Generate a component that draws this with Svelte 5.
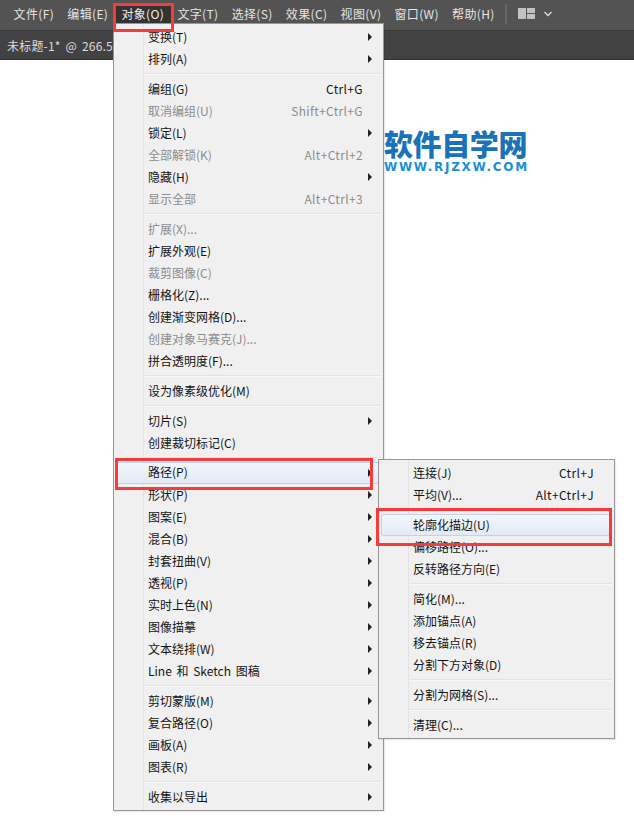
<script>
  const menuBar = ['文件(F)', '编辑(E)', '对象(O)', '文字(T)', '选择(S)', '效果(C)', '视图(V)', '窗口(W)', '帮助(H)'];

  // each group is one block between separators
  const objectMenu = [
    [{ t: '变换(T)', sub: 1 }, { t: '排列(A)', sub: 1 }],
    [
      { t: '编组(G)', key: 'Ctrl+G' },
      { t: '取消编组(U)', key: 'Shift+Ctrl+G', off: 1 },
      { t: '锁定(L)', sub: 1 },
      { t: '全部解锁(K)', key: 'Alt+Ctrl+2', off: 1 },
      { t: '隐藏(H)', sub: 1 },
      { t: '显示全部', key: 'Alt+Ctrl+3', off: 1 },
    ],
    [
      { t: '扩展(X)...', off: 1 },
      { t: '扩展外观(E)' },
      { t: '裁剪图像(C)', off: 1 },
      { t: '栅格化(Z)...' },
      { t: '创建渐变网格(D)...' },
      { t: '创建对象马赛克(J)...', off: 1 },
      { t: '拼合透明度(F)...' },
    ],
    [{ t: '设为像素级优化(M)' }],
    [{ t: '切片(S)', sub: 1 }, { t: '创建裁切标记(C)' }],
    [
      { t: '路径(P)', sub: 1, hot: 1 },
      { t: '形状(P)', sub: 1 },
      { t: '图案(E)', sub: 1 },
      { t: '混合(B)', sub: 1 },
      { t: '封套扭曲(V)', sub: 1 },
      { t: '透视(P)', sub: 1 },
      { t: '实时上色(N)', sub: 1 },
      { t: '图像描摹', sub: 1 },
      { t: '文本绕排(W)', sub: 1 },
      { t: 'Line 和 Sketch 图稿', sub: 1 },
    ],
    [
      { t: '剪切蒙版(M)', sub: 1 },
      { t: '复合路径(O)', sub: 1 },
      { t: '画板(A)', sub: 1 },
      { t: '图表(R)', sub: 1 },
    ],
    [{ t: '收集以导出', sub: 1 }],
  ];

  const pathMenu = [
    [{ t: '连接(J)', key: 'Ctrl+J' }, { t: '平均(V)...', key: 'Alt+Ctrl+J' }],
    [{ t: '轮廓化描边(U)', hot: 1 }, { t: '偏移路径(O)...' }, { t: '反转路径方向(E)' }],
    [{ t: '简化(M)...' }, { t: '添加锚点(A)' }, { t: '移去锚点(R)' }, { t: '分割下方对象(D)' }],
    [{ t: '分割为网格(S)...' }],
    [{ t: '清理(C)...' }],
  ];
</script>

{#snippet menu(groups, cls)}
  <div class="menu {cls}">
    {#each groups as group, g}
      {#if g > 0}<div class="sep"></div>{/if}
      {#each group as item}
        <div class="item" class:off={item.off} class:hot={item.hot}>
          <span class="label">{item.t}</span>
          {#if item.key}<span class="key">{item.key}</span>{/if}
          {#if item.sub}<span class="arrow"></span>{/if}
        </div>
      {/each}
    {/each}
  </div>
{/snippet}

<div class="app">
  <div class="menubar">
    {#each menuBar as name}
      <span class="top" class:active={name === '对象(O)'}>{name}</span>
    {/each}
    <span class="divider"></span>
    <svg class="layout" width="17" height="11" viewBox="0 0 17 11">
      <rect x="0" y="0" width="8" height="11" fill="#c2c2c2" />
      <rect x="9" y="0" width="8" height="5" fill="#c2c2c2" />
      <rect x="9" y="6" width="8" height="5" fill="#c2c2c2" />
    </svg>
    <svg class="chev" width="8" height="6" viewBox="0 0 8 6">
      <path d="M.5 1L4 4.5 7.5 1" fill="none" stroke="#d8d8d8" stroke-width="1.5" />
    </svg>
  </div>
  <div class="tabbar"><span class="tab">未标题-1* @ 266.5</span></div>

  <div class="canvas">
    <div class="logo">
      <div class="logo-cn">软件自学网</div>
      <div class="logo-en">WWW.RJZXW.COM</div>
    </div>
  </div>

  {@render menu(objectMenu, 'object')}
  {@render menu(pathMenu, 'path')}

  <div class="mark mark-top"></div>
  <div class="mark mark-path"></div>
  <div class="mark mark-outline"></div>
</div>

<style>
  :global(body) {
    margin: 0;
    background: #fff;
  }
  .app {
    position: relative;
    width: 634px;
    height: 837px;
    overflow: hidden;
    display: flex;
    flex-direction: column;
    font-family: "Noto Sans CJK SC", "Noto Sans", sans-serif;
    font-size: 12px;
  }
  .menubar {
    height: 31px;
    flex: none;
    display: flex;
    align-items: center;
    padding-left: 7px;
    padding-bottom: 3px;
    background: #535353;
    border-bottom: 1px solid #3a3a3a;
    box-sizing: border-box;
  }
  .top {
    padding: 0 6.6px;
    line-height: 20px;
    height: 20px;
    color: #e4e4e4;
    white-space: nowrap;
    letter-spacing: 0.35px;
  }
  .top.active {
    background: #333;
    color: #eee;
  }
  .divider {
    width: 2px;
    height: 20px;
    margin: 0 11px 0 4px;
    background: #666;
  }
  .layout {
    flex: none;
  }
  .chev {
    flex: none;
    margin-left: 9px;
  }
  .tabbar {
    height: 29px;
    flex: none;
    box-sizing: border-box;
    background: #424242;
    border-bottom: 1px solid #2f2f2f;
    display: flex;
    align-items: center;
    padding-left: 7px;
    color: #dcdcdc;
  }
  .tab {
    white-space: pre;
    word-spacing: 2px;
    letter-spacing: 0.2px;
  }
  .canvas {
    flex: 1;
    background: #fff;
    position: relative;
  }
  .logo {
    position: absolute;
    left: 384px;
    top: 69px;
    width: 146px;
  }
  .logo-cn {
    font-size: 29px;
    line-height: 28px;
    font-weight: 900;
    color: #1a72b8;
    white-space: nowrap;
    letter-spacing: -0.4px;
  }
  .logo-en {
    margin-top: 4px;
    font-family: "DejaVu Sans", sans-serif;
    font-size: 12px;
    line-height: 12px;
    font-weight: 700;
    color: #1a8fd6;
    white-space: nowrap;
    letter-spacing: 1.7px;
  }
  .menu {
    position: absolute;
    box-sizing: border-box;
    background: #f0f0f0;
    border: 1px solid #979797;
    padding: 2px;
    box-shadow: 1px 1px 1px rgba(0, 0, 0, 0.08);
    background-image: linear-gradient(#e3e3e3, #e3e3e3);
    background-repeat: no-repeat;
    background-position: 29px 0;
    background-size: 1px 100%;
  }
  .menu.object {
    left: 113px;
    top: 23px;
    width: 271px;
    height: 788px;
  }
  .menu.path {
    left: 378px;
    top: 459px;
    width: 237px;
    height: 280px;
  }
  .item {
    height: 22px;
    display: flex;
    align-items: center;
    padding-left: 32px;
    padding-right: 18px;
    padding-bottom: 2px;
    color: #141414;
    position: relative;
    box-sizing: border-box;
    white-space: nowrap;
  }
  .item.off {
    color: #8c8c8c;
  }
  .item.hot {
    background: linear-gradient(#f3f6fb, #e2eaf6);
    border: 1px solid #bcd4f0;
    border-radius: 2px;
    padding-left: 31px;
  }
  .object .item.hot {
    padding-bottom: 4px;
  }
  .label {
    flex: 1;
    word-spacing: 2px;
  }
  .key {
    letter-spacing: 0.35px;
  }
  .arrow {
    position: absolute;
    right: 9px;
    top: 7px;
    width: 0;
    height: 0;
    border-left: 4px solid #222;
    border-top: 4px solid transparent;
    border-bottom: 4px solid transparent;
  }
  .hot .arrow {
    right: 8px;
    top: 6px;
  }
  .sep {
    height: 2px;
    margin: 3px 0 3px 29px;
    background: #e3e3e3;
    border-bottom: 1px solid #f9f9f9;
    box-sizing: border-box;
  }
  .mark {
    position: absolute;
    box-sizing: border-box;
    border: 3px solid #f93a3a;
  }
  .mark-top {
    left: 113px;
    top: 3px;
    width: 61px;
    height: 29px;
  }
  .mark-path {
    left: 115px;
    top: 458px;
    width: 258px;
    height: 32px;
  }
  .mark-outline {
    left: 376px;
    top: 508px;
    width: 236px;
    height: 38px;
  }
</style>
